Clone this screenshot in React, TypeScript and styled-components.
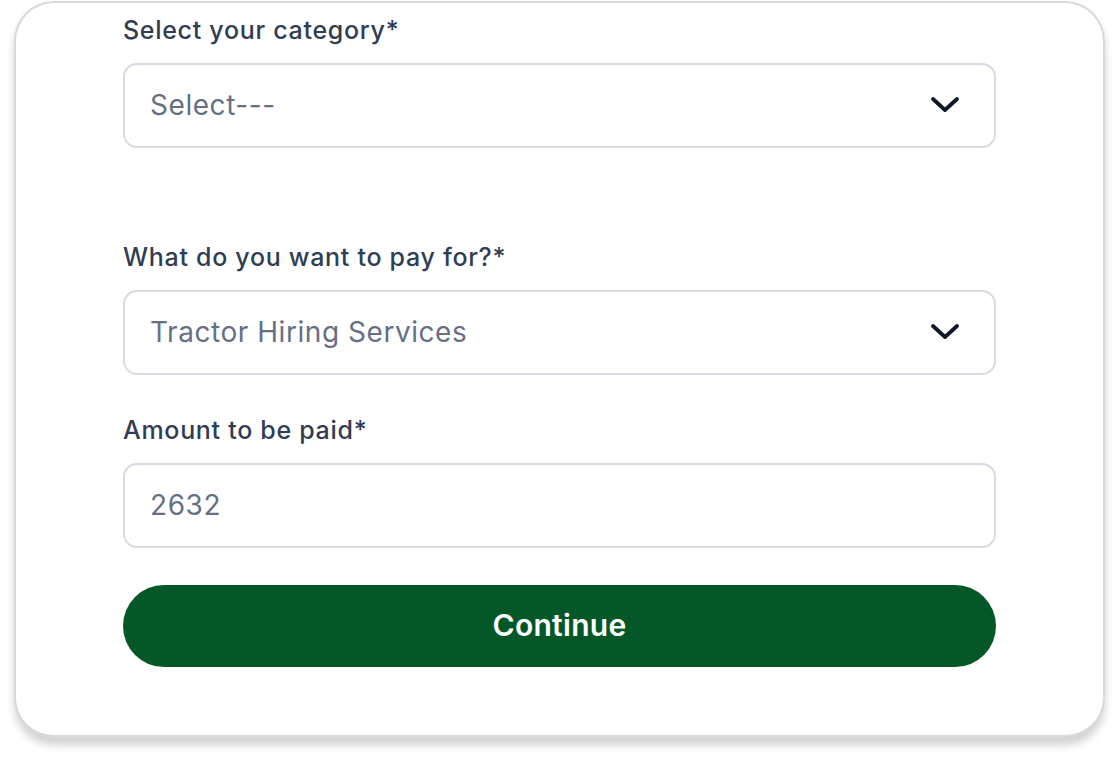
import React from "react";
import styled, { createGlobalStyle } from "styled-components";

const Global = createGlobalStyle`
  html, body { margin: 0; padding: 0; background: #ffffff; }
  body { font-family: Inter, "Noto Sans", sans-serif; }
  * { box-sizing: border-box; }
`;

const Page = styled.div`
  width: 1119px;
  height: 762px;
  padding: 1px 0 0 14px;
  overflow: hidden;
`;

const Card = styled.div`
  width: 1091px;
  height: 737px;
  background: #ffffff;
  border: 2px solid #d9d9d9;
  border-bottom-width: 3px;
  border-radius: 40px;
  box-shadow: 0 7px 9px rgba(0, 0, 0, 0.18);
  padding: 12px 0 0 107px;
  display: flex;
  flex-direction: column;
`;

const Group = styled.div<{ $after: number }>`
  display: flex;
  flex-direction: column;
  gap: 18px;
  width: 873px;
  margin-bottom: ${(p) => p.$after}px;
`;

const Label = styled.label`
  font-size: 25px;
  line-height: 30px;
  font-weight: 500;
  color: #303d52;
  letter-spacing: 0.7px;
`;

const Field = styled.div`
  height: 85px;
  border: 2px solid #d7dbe4;
  border-radius: 14px;
  display: flex;
  align-items: center;
  justify-content: space-between;
  padding: 0 33px 2px 25px;
  font-size: 28px;
  letter-spacing: 0.55px;
  color: #667085;
`;

const Chevron = styled.svg`
  width: 30px;
  height: 30px;
  margin-right: 1px;
`;

const Button = styled.button`
  width: 873px;
  height: 82px;
  border: none;
  border-radius: 41px;
  background: #045828;
  color: #ffffff;
  font-family: Inter, "Noto Sans", sans-serif;
  font-size: 30px;
  font-weight: 600;
  letter-spacing: 0.3px;
  display: flex;
  align-items: center;
  justify-content: center;
  padding: 0 0 3px;
`;

const Down = () => (
  <Chevron viewBox="0 0 30 30" fill="none" stroke="#101828" strokeWidth={3.8} strokeLinecap="round" strokeLinejoin="round">
    <path d="M3 9l12 11 12-11" />
  </Chevron>
);

export default function App() {
  return (
    <>
      <Global />
      <Page>
        <Card>
          <Group $after={94}>
            <Label>Select your category*</Label>
            <Field>
              <span>Select---</span>
              <Down />
            </Field>
          </Group>
          <Group $after={40}>
            <Label>What do you want to pay for?*</Label>
            <Field>
              <span>Tractor Hiring Services</span>
              <Down />
            </Field>
          </Group>
          <Group $after={37}>
            <Label>Amount to be paid*</Label>
            <Field>
              <span>2632</span>
            </Field>
          </Group>
          <Button>Continue</Button>
        </Card>
      </Page>
    </>
  );
}
